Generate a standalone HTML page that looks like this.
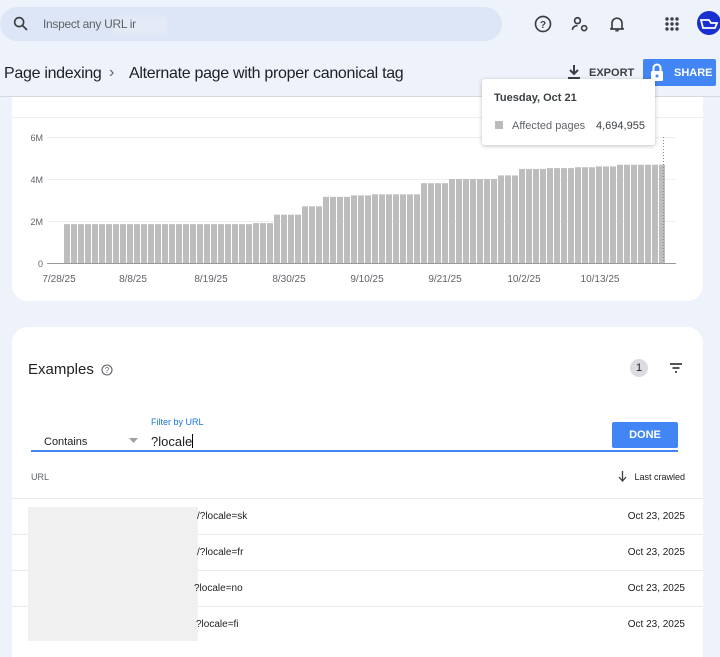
<!DOCTYPE html>
<html><head><meta charset="utf-8"><style>
*{margin:0;padding:0;box-sizing:border-box}
body{width:720px;height:643px;overflow:hidden;background:#eef2fa;font-family:"Liberation Sans",sans-serif;position:relative;color:#202124}
.a{position:absolute}
.t{position:absolute;white-space:nowrap}
</style></head><body>
<div class="a" style="left:0;top:7px;width:502px;height:34px;border-radius:17px;background:#dde6f6"></div>
<svg class="a" style="left:12px;top:15px" width="18" height="18" viewBox="0 0 24 24"><circle cx="9.5" cy="9.5" r="6" fill="none" stroke="#3c4043" stroke-width="2.2"/><path d="M14 14l6 6" stroke="#3c4043" stroke-width="2.4"/></svg>
<div class="a" style="left:112px;top:16px;width:55px;height:18px;background:#e4eaf6;filter:blur(2px)"></div>
<div class="t" style="left:43px;top:17px;font-size:12px;color:#5f6368;letter-spacing:-0.3px">Inspect any URL ir</div>
<svg class="a" style="left:533px;top:14px" width="20" height="20" viewBox="0 0 24 24"><circle cx="12" cy="12" r="9" fill="none" stroke="#3c4043" stroke-width="2"/><text x="12" y="16.5" font-size="12" text-anchor="middle" font-family="Liberation Sans" font-weight="bold" fill="#3c4043">?</text></svg>
<svg class="a" style="left:570px;top:14px" width="20" height="20" viewBox="0 0 24 24"><circle cx="9" cy="8" r="3.5" fill="none" stroke="#3c4043" stroke-width="2"/><path d="M3 19c0-4 4-5 6-5" fill="none" stroke="#3c4043" stroke-width="2"/><circle cx="17" cy="17" r="3" fill="none" stroke="#3c4043" stroke-width="2"/></svg>
<svg class="a" style="left:607px;top:14px" width="20" height="20" viewBox="0 0 24 24"><path d="M6 17V11a6 6 0 0 1 12 0v6l2 1H4z" fill="none" stroke="#3c4043" stroke-width="2"/><path d="M10 20h4" stroke="#3c4043" stroke-width="2"/></svg>
<svg class="a" style="left:664px;top:16px" width="16" height="16" viewBox="0 0 16 16" fill="#3c4043"><circle cx="3" cy="3" r="1.7"/><circle cx="8" cy="3" r="1.7"/><circle cx="13" cy="3" r="1.7"/><circle cx="3" cy="8" r="1.7"/><circle cx="8" cy="8" r="1.7"/><circle cx="13" cy="8" r="1.7"/><circle cx="3" cy="13" r="1.7"/><circle cx="8" cy="13" r="1.7"/><circle cx="13" cy="13" r="1.7"/></svg>
<div class="a" style="left:697px;top:11px;width:24px;height:24px;border-radius:50%;background:#1a2fd0"></div>
<svg class="a" style="left:699px;top:16px" width="20" height="14" viewBox="0 0 20 14"><path d="M2 4h8l2 3h6l-2 5H4z" fill="none" stroke="#fff" stroke-width="1.8"/></svg>

<div class="t" style="left:4px;top:65px;font-size:16px;letter-spacing:-0.3px">Page indexing</div>
<div class="t" style="left:109px;top:64px;font-size:16px;color:#5f6368">›</div>
<div class="t" style="left:129px;top:65px;font-size:16px;letter-spacing:-0.3px">Alternate page with proper canonical tag</div>
<svg class="a" style="left:566px;top:64px" width="16" height="16" viewBox="0 0 16 16"><path d="M8 1v9M4 6l4 4 4-4" fill="none" stroke="#3c4043" stroke-width="2"/><path d="M2 14h12" stroke="#3c4043" stroke-width="2"/></svg>
<div class="t" style="left:589px;top:67px;font-size:11px;font-weight:bold;color:#3c4043">EXPORT</div>
<div class="a" style="left:643px;top:59px;width:73px;height:27px;background:#4285f4;border-radius:2px"></div>
<svg class="a" style="left:650px;top:62px" width="14" height="20" viewBox="0 0 14 20"><path d="M3.5 9V6a3.5 3.5 0 0 1 7 0v3" fill="none" stroke="#fff" stroke-width="2"/><rect x="1" y="9" width="12" height="10" rx="1" fill="#fff"/><circle cx="7" cy="14" r="1.5" fill="#4285f4"/></svg>
<div class="t" style="left:674px;top:67px;font-size:11px;font-weight:bold;color:#fff">SHARE</div>
<div class="a" style="left:0;top:96px;width:720px;height:1px;background:#d6d9de"></div>

<div class="a" style="left:12px;top:97px;width:691px;height:204px;background:#fff;border-radius:0 0 16px 16px"></div>
<div class="a" style="left:12px;top:117px;width:691px;height:1px;background:#eee"></div>
<svg class="a" id="ch" style="left:0;top:120px" width="720" height="170"></svg>

<div class="a" style="left:482px;top:79px;width:173px;height:66px;background:#fff;border-radius:3px;box-shadow:0 1px 4px rgba(0,0,0,.25)"></div>
<div class="t" style="left:494px;top:92px;font-size:11px;font-weight:bold;color:#3c4043">Tuesday, Oct 21</div>
<div class="a" style="left:495px;top:121px;width:8px;height:8px;background:#bbb"></div>
<div class="t" style="left:512px;top:120px;font-size:11px;color:#5f6368">Affected pages</div>
<div class="t" style="left:596px;top:120px;font-size:11px;color:#3c4043">4,694,955</div>

<div class="a" style="left:12px;top:327px;width:691px;height:330px;background:#fff;border-radius:16px 16px 0 0"></div>
<div class="t" style="left:28px;top:361px;font-size:15px">Examples</div>
<svg class="a" style="left:101px;top:364px" width="12" height="12" viewBox="0 0 12 12"><circle cx="6" cy="6" r="5" fill="none" stroke="#5f6368" stroke-width="1.1"/><text x="6" y="9" font-size="8" text-anchor="middle" fill="#5f6368" font-family="Liberation Sans">?</text></svg>
<div class="a" style="left:630px;top:359px;width:18px;height:18px;border-radius:50%;background:#dadce0;font-size:11px;text-align:center;line-height:18px">1</div>
<svg class="a" style="left:669px;top:362px" width="14" height="12" viewBox="0 0 14 12"><path d="M1 2h12M3.5 6h7M6 10h2" stroke="#3c4043" stroke-width="1.8"/></svg>
<div class="t" style="left:151px;top:417px;font-size:9px;color:#1a73e8">Filter by URL</div>
<div class="t" style="left:44px;top:436px;font-size:11px">Contains</div>
<svg class="a" style="left:129px;top:438px" width="9" height="5"><path d="M0 0h9L4.5 5z" fill="#9aa0a6"/></svg>
<div class="t" style="left:151px;top:434px;font-size:13px">?locale<span style="display:inline-block;width:1px;height:14px;background:#000;vertical-align:-2px"></span></div>
<div class="a" style="left:31px;top:450px;width:647px;height:2px;background:#4285f4"></div>
<div class="a" style="left:612px;top:422px;width:66px;height:26px;background:#4285f4;border-radius:2px;color:#fff;font-size:11px;font-weight:bold;text-align:center;line-height:26px">DONE</div>
<div class="t" style="left:31px;top:472px;font-size:9px;color:#5f6368">URL</div>
<svg class="a" style="left:618px;top:471px" width="9" height="11"><path d="M4.5 0v9M1 6l3.5 4 3.5-4" fill="none" stroke="#3c4043" stroke-width="1.3"/></svg>
<div class="t" style="right:35px;top:472px;font-size:9px;color:#202124">Last crawled</div>
<div class="a" style="left:12px;top:498px;width:691px;height:1px;background:#e8eaed"></div>
<div class="a" style="left:12px;top:534px;width:691px;height:1px;background:#e8eaed"></div>
<div class="a" style="left:12px;top:570px;width:691px;height:1px;background:#e8eaed"></div>
<div class="a" style="left:12px;top:606px;width:691px;height:1px;background:#e8eaed"></div>
<div class="a" style="left:28px;top:507px;width:170px;height:134px;background:#f0f0f0"></div>
<div class="t" style="left:197px;top:511px;font-size:10px">/?locale=sk</div>
<div class="t" style="left:197px;top:547px;font-size:10px">/?locale=fr</div>
<div class="t" style="left:194px;top:583px;font-size:10px">?locale=no</div>
<div class="t" style="left:196px;top:619px;font-size:10px">?locale=fi</div>
<div class="t" style="right:35px;top:511px;font-size:10px">Oct 23, 2025</div>
<div class="t" style="right:35px;top:547px;font-size:10px">Oct 23, 2025</div>
<div class="t" style="right:35px;top:583px;font-size:10px">Oct 23, 2025</div>
<div class="t" style="right:35px;top:619px;font-size:10px">Oct 23, 2025</div>
<script>
var s='',ns=[[248,1.85],[270,1.9],[297,2.3],[320,2.7],[348,3.15],[369,3.22],[418,3.27],[447,3.8],[496,4.0],[518,4.17],[546,4.48],[575,4.52],[596,4.56],[617,4.6],[662,4.68],[999,4.8]];
var ys=[[17,'6M'],[59,'4M'],[101,'2M'],[143,'0']];
ys.forEach(function(y){s+='<line x1="47" x2="676" y1="'+(y[0]+.5)+'" y2="'+(y[0]+.5)+'" stroke="'+(y[1]=='0'?'#999':'#eee')+'"/><text x="43" y="'+(y[0]+4)+'" font-size="9" text-anchor="end" fill="#5f6368" font-family="Liberation Sans">'+y[1]+'</text>';});
for(var i=0;i<86;i++){var x=64+7*i,v=1.85;for(var j=0;j<ns.length;j++){if(x<ns[j][0]){v=ns[j][1];break;}}var h=v*21;s+='<rect x="'+x+'" y="'+(143-h)+'" width="6" height="'+h+'" fill="#bdbdbd"/>';}
s+='<line x1="663.5" x2="663.5" y1="17" y2="143" stroke="#888" stroke-dasharray="1,2"/>';
[[59,'7/28/25'],[133,'8/8/25'],[211,'8/19/25'],[289,'8/30/25'],[367,'9/10/25'],[445,'9/21/25'],[524,'10/2/25'],[600,'10/13/25']].forEach(function(d){s+='<text x="'+d[0]+'" y="162" font-size="10" text-anchor="middle" fill="#5f6368" font-family="Liberation Sans">'+d[1]+'</text>';});
document.getElementById('ch').innerHTML=s;
</script>
</body></html>
